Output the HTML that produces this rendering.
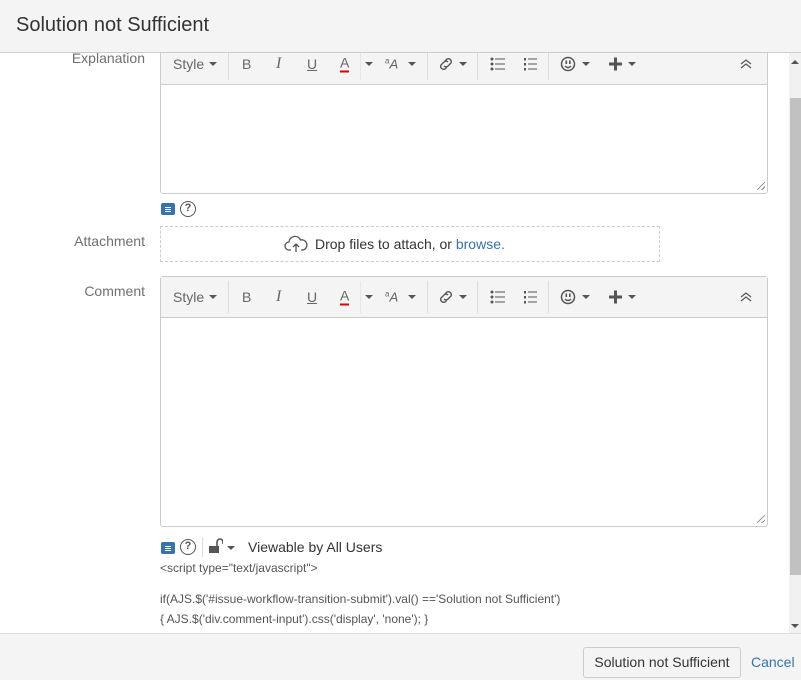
<!DOCTYPE html>
<html><head><meta charset="utf-8"><style>
*{box-sizing:border-box;margin:0;padding:0}
body{width:801px;height:680px;position:relative;overflow:hidden;background:#fff;font-family:"Liberation Sans",Arial,sans-serif;color:#333}
.a{position:absolute}
.hdr{left:0;top:0;width:801px;height:53px;background:#f4f4f4;border-bottom:1px solid #ccc;z-index:5}
.hdr h1{position:absolute;left:16px;top:14px;font-size:20px;font-weight:normal;color:#333}
.lbl{font-size:14px;color:#707070;text-align:right;width:145px;left:0}
.ed{left:160px;width:608px;border:1px solid #ccc;border-radius:3px;background:#fff}
.tb{position:absolute;left:0;top:0;width:100%;background:#f4f4f4;border-bottom:1px solid #ccc}
.ti{position:absolute;font-size:14px;color:#666;top:50%;transform:translateY(-50%)}
.car{position:absolute;top:50%;margin-top:-2px;width:0;height:0;border-left:4px solid transparent;border-right:4px solid transparent;border-top:4px solid #555}
.sep{position:absolute;top:4px;bottom:4px;width:1px;background:#ddd}
.foot{left:0;top:633px;width:801px;height:47px;background:#f4f4f4;border-top:1px solid #ddd}
.code{font-size:12px;color:#555;left:160px}
.ico{width:14px;height:12px;background:#3572b0;border-radius:2px}
</style></head><body>
<div class="a hdr"><h1>Solution not Sufficient</h1></div>

<div class="a lbl" style="top:50px">Explanation</div>
<div class="a ed" style="top:43px;height:151px">
 <div class="tb" style="height:41px" id="t1"></div>
</div>
<div class="a ico" style="left:161px;top:203px"><div style="position:absolute;left:4px;top:4px;width:6px;height:1px;background:#fff;box-shadow:0 2px #fff,0 4px #fff"></div></div>
<div class="a" style="left:180px;top:201px;width:16px;height:16px;border:1.5px solid #555;border-radius:50%;font-size:11px;font-weight:bold;text-align:center;line-height:13px;color:#555">?</div>

<div class="a lbl" style="top:233px">Attachment</div>
<div class="a" style="left:160px;top:226px;width:500px;height:36px;border:1px dashed #ccc"></div>
<svg class="a" style="left:284px;top:234px" width="24" height="20" viewBox="0 0 24 20"><path d="M7 16H5a4 4 0 0 1 0-8 6 6 0 0 1 11.5-2A5 5 0 0 1 19 16h-2M12 18V10M9 13l3-3 3 3" fill="none" stroke="#555" stroke-width="1.3"/></svg>
<div class="a" style="left:315px;top:236px;font-size:14px;color:#333">Drop files to attach, or <span style="color:#3572b0">browse.</span></div>

<div class="a lbl" style="top:283px">Comment</div>
<div class="a ed" style="top:276px;height:251px">
 <div class="tb" style="height:41px" id="t2"></div>
</div>

<div class="a ico" style="left:161px;top:542px"><div style="position:absolute;left:4px;top:4px;width:6px;height:1px;background:#fff;box-shadow:0 2px #fff,0 4px #fff"></div></div>
<div class="a" style="left:180px;top:539px;width:16px;height:16px;border:1.5px solid #555;border-radius:50%;font-size:11px;font-weight:bold;text-align:center;line-height:13px;color:#555">?</div>
<div class="a" style="left:202px;top:537px;width:1px;height:20px;background:#ddd"></div>
<svg class="a" style="left:209px;top:538px" width="14" height="16" viewBox="0 0 14 16"><path d="M8 8V4a3 3 0 0 1 6 0v2" fill="none" stroke="#555" stroke-width="1.6"/><rect x="0" y="8" width="10" height="7" fill="#555"/></svg>
<div class="a car" style="left:227px;top:548px"></div>
<div class="a" style="left:248px;top:539px;font-size:14px;color:#333">Viewable by All Users</div>
<div class="a code" style="top:561px">&lt;script type="text/javascript"&gt;</div>
<div class="a code" style="top:592px">if(AJS.$('#issue-workflow-transition-submit').val() =='Solution not Sufficient')</div>
<div class="a code" style="top:612px">{ AJS.$('div.comment-input').css('display', 'none'); }</div>

<div class="a" style="left:789px;top:53px;width:12px;height:580px;background:#f1f1f1"></div>
<div class="a" style="left:790px;top:98px;width:11px;height:477px;background:#c1c1c1"></div>
<div class="a car" style="left:791px;top:60px;border-top:none;border-bottom:4px solid #555;margin-top:0"></div>
<div class="a car" style="left:791px;top:624px;margin-top:0"></div>

<div class="a foot">
 <div class="a" style="left:583px;top:13px;width:158px;height:31px;border:1px solid #ccc;border-radius:3px;background:#f4f4f4;font-size:14px;text-align:center;line-height:29px;color:#333">Solution not Sufficient</div>
 <div class="a" style="left:751px;top:20px;font-size:14px;color:#3572b0">Cancel</div>
</div>

<template id="tbt">
 <span class="ti" style="left:12px">Style</span><span class="car" style="left:48px"></span>
 <span class="sep" style="left:67px"></span>
 <span class="ti" style="left:81px">B</span>
 <span class="ti" style="left:115px;font-style:italic;font-family:'Liberation Serif',serif;font-size:16px">I</span>
 <span class="ti" style="left:146px;text-decoration:underline">U</span>
 <span class="ti" style="left:179px;border-bottom:2px solid #d00;line-height:15px">A</span>
 <span class="sep" style="left:199px;background:#e6e6e6"></span>
 <span class="car" style="left:204px"></span>
 <span class="ti" style="left:224px;font-size:13px;font-style:italic"><sup style="font-size:8px;font-style:normal">a</sup>A</span><span class="car" style="left:247px"></span>
 <span class="sep" style="left:266px"></span>
 <svg class="ti" style="left:276px" width="18" height="18" viewBox="0 0 18 18"><path d="M8 6l2-2a3 3 0 0 1 4 4l-3 3a3 3 0 0 1-4 0M10 12l-2 2a3 3 0 0 1-4-4l3-3a3 3 0 0 1 4 0" fill="none" stroke="#555" stroke-width="1.4"/></svg><span class="car" style="left:298px"></span>
 <span class="sep" style="left:316px"></span>
 <svg class="ti" style="left:329px" width="16" height="14" viewBox="0 0 16 14"><g fill="#555"><circle cx="2" cy="2" r="1.5"/><circle cx="2" cy="7" r="1.5"/><circle cx="2" cy="12" r="1.5"/><rect x="5" y="1.5" width="10" height="1"/><rect x="5" y="6.5" width="10" height="1"/><rect x="5" y="11.5" width="10" height="1"/></g></svg>
 <svg class="ti" style="left:362px" width="16" height="14" viewBox="0 0 16 14"><g fill="#555"><rect x="1" y="1" width="2" height="2.5"/><rect x="1" y="6" width="2" height="2.5"/><rect x="1" y="11" width="2" height="2.5"/><rect x="5" y="1.5" width="9" height="1"/><rect x="5" y="6.5" width="9" height="1"/><rect x="5" y="11.5" width="9" height="1"/></g></svg>
 <span class="sep" style="left:387px"></span>
 <svg class="ti" style="left:399px" width="16" height="16" viewBox="0 0 16 16"><circle cx="8" cy="8" r="6.5" fill="none" stroke="#555" stroke-width="1.5"/><rect x="5.5" y="4.5" width="1.6" height="3.5" fill="#555"/><rect x="9" y="4.5" width="1.6" height="3.5" fill="#555"/><path d="M5 10q3 3 6 0" fill="none" stroke="#555" stroke-width="1.4"/></svg><span class="car" style="left:421px"></span>
 <svg class="ti" style="left:448px" width="13" height="13" viewBox="0 0 13 13"><path d="M5 0h3v5h5v3H8v5H5V8H0V5h5z" fill="#555"/></svg><span class="car" style="left:467px"></span>
 <svg class="ti" style="left:579px" width="12" height="10" viewBox="0 0 12 10"><path d="M1 5l5-4 5 4M1 9l5-4 5 4" fill="none" stroke="#555" stroke-width="1.2"/></svg>
</template>
<script>
var t=document.getElementById('tbt').innerHTML;
document.getElementById('t1').innerHTML=t;
document.getElementById('t2').innerHTML=t;
</script>
<div class="a" style="left:757px;top:182px;width:8px;height:8px;background:linear-gradient(135deg,transparent 45%,#999 45%,#999 55%,transparent 55%,transparent 75%,#999 75%,#999 85%,transparent 85%)"></div>
<div class="a" style="left:757px;top:515px;width:8px;height:8px;background:linear-gradient(135deg,transparent 45%,#999 45%,#999 55%,transparent 55%,transparent 75%,#999 75%,#999 85%,transparent 85%)"></div>
</body></html>
